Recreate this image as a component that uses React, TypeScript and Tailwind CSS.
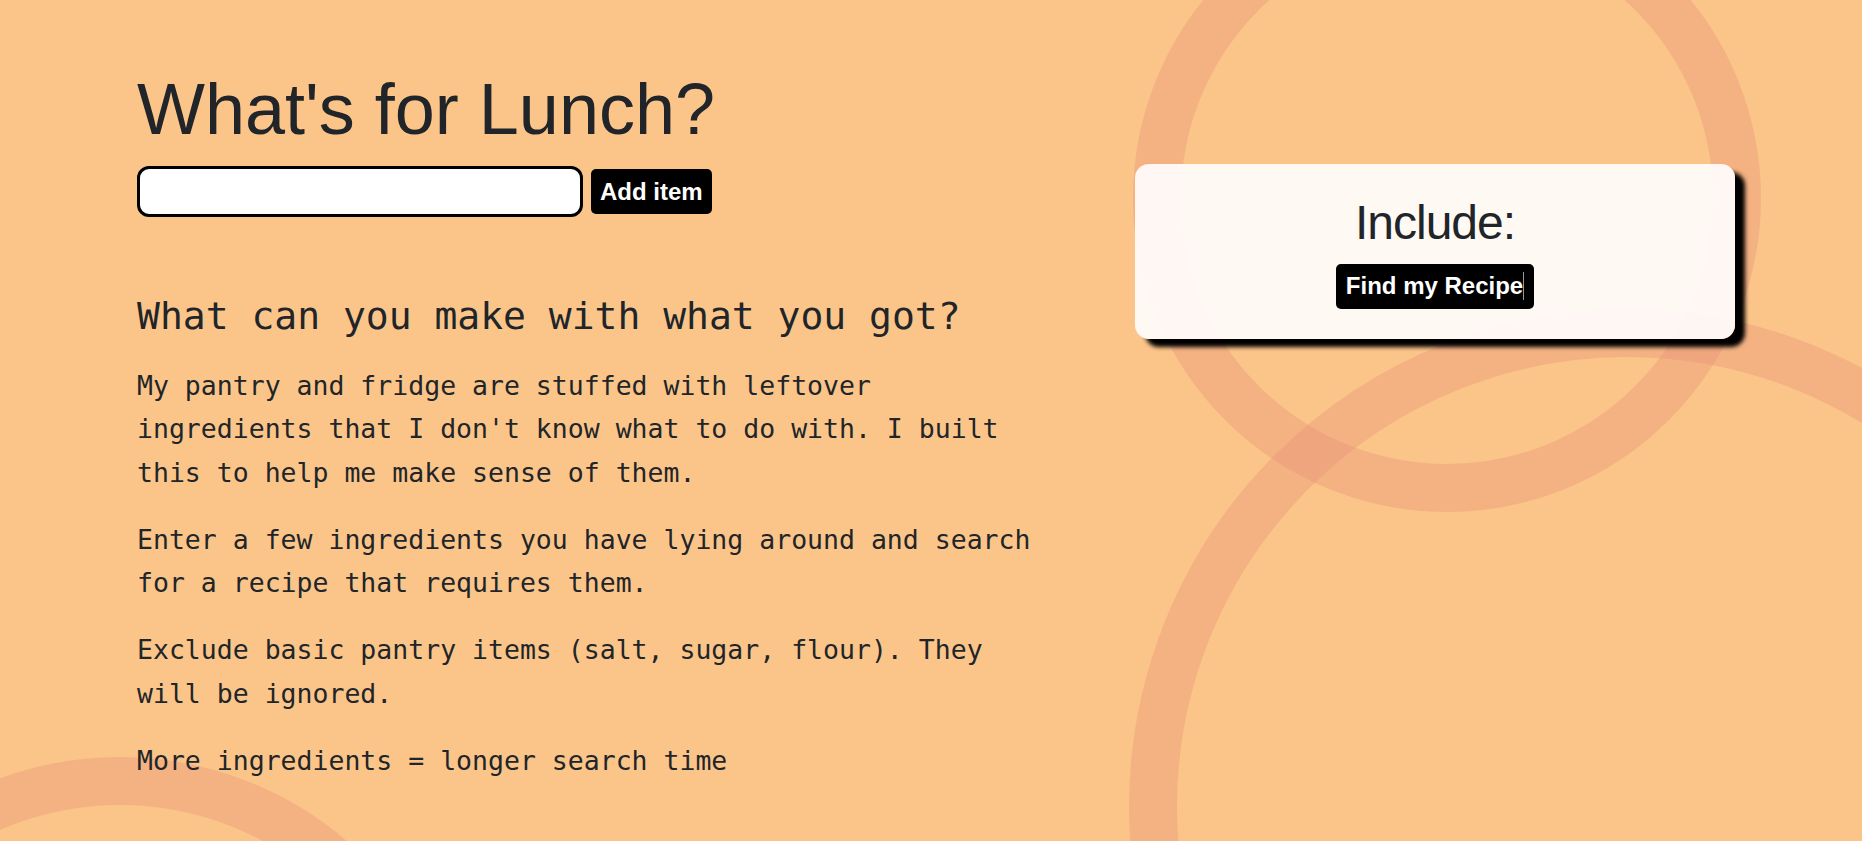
import { useState } from 'react'

const paragraphs = [
  "My pantry and fridge are stuffed with leftover ingredients that I don't know what to do with. I built this to help me make sense of them.",
  'Enter a few ingredients you have lying around and search for a recipe that requires them.',
  'Exclude basic pantry items (salt, sugar, flour). They will be ignored.',
  'More ingredients = longer search time',
]

function Rings() {
  return (
    <svg className="absolute inset-0 w-full h-full pointer-events-none" aria-hidden="true">
      <g fill="none" stroke="rgba(228,137,115,0.3)" strokeWidth="48">
        <circle cx="1447" cy="198" r="290" />
        <circle cx="1627" cy="807" r="474" />
        <circle cx="120" cy="1105" r="324" />
      </g>
    </svg>
  )
}

export default function App() {
  const [item, setItem] = useState('')

  return (
    <div className="relative min-h-screen overflow-hidden bg-[#fbc58a] text-[#212529] font-['Liberation_Sans',Arial,sans-serif]">
      <Rings />
      <div className="relative flex pl-[137px]">
        <div className="w-[998px] pt-[66px]">
          <h1 className="text-[72px] leading-[1.2] font-normal">What's for Lunch?</h1>
          <div className="flex items-center gap-2 mt-[14px]">
            <input
              value={item}
              onChange={(e) => setItem(e.target.value)}
              className="w-[446px] h-[51px] bg-white border-[3px] border-black rounded-[12px] px-3 text-xl outline-none"
            />
            <button className="h-[45px] px-[9px] bg-black text-white text-[24px] font-bold rounded-[5px]">
              Add item
            </button>
          </div>

          <div className="mt-[77px] font-['DejaVu_Sans_Mono',monospace]">
            <h2 className="text-[38px] leading-[1.2] font-normal">What can you make with what you got?</h2>
            <div className="mt-[24px] w-[56.5ch] text-[26.5px] leading-[43.5px] flex flex-col gap-[23.5px]">
              {paragraphs.map((p) => (
                <p key={p}>{p}</p>
              ))}
            </div>
          </div>
        </div>

        <div className="mt-[164px] w-[600px] self-start rounded-[14px] bg-white/90 shadow-[10px_8px_4px_#000] pt-[30px] pb-[30px] flex flex-col items-center gap-[12px]">
          <h3 className="text-[48px] leading-[1.2] tracking-[-1px] font-normal">Include:</h3>
          <button className="h-[45px] px-[10px] bg-black text-white text-[24px] font-bold rounded-[5px] flex items-center">
            Find my Recipe
            <span className="inline-block w-px h-[28px] bg-[#999]" />
          </button>
        </div>
      </div>
    </div>
  )
}
